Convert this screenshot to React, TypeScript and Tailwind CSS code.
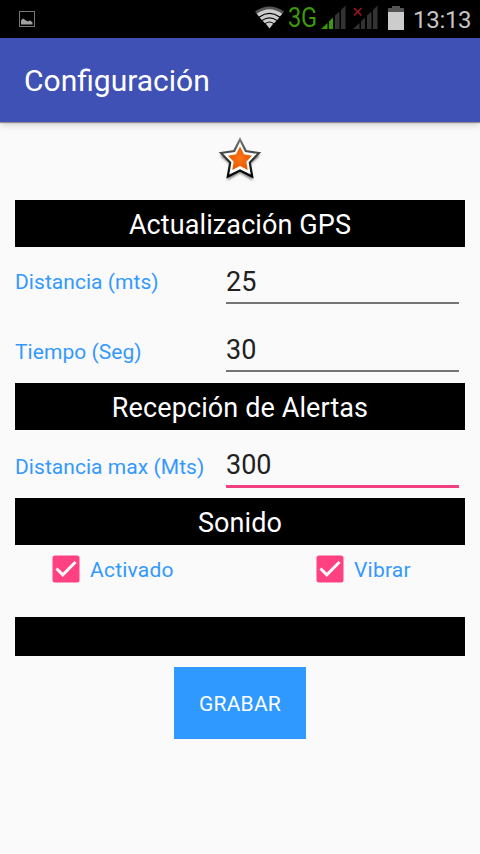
import React from 'react';

const StatusBar: React.FC = () => {
  return (
    <div className="h-[38px] bg-black flex items-start justify-between pl-[19px] pr-[9px]">
      <svg className="mt-[11px]" width="16" height="16" viewBox="0 0 16 16">
        <rect x="0.5" y="0.5" width="15" height="15" fill="none" stroke="#777777" />
        <path d="M2 13.500V9.500L4 7.500L5.500 8.500L7 9.500L9 10.500L10.500 9.500L12 10L13.500 11.500V13.500z" fill="#a0a0a0" />
      </svg>

      <div className="flex items-start">
        {/* Wifi */}
        <svg className="mt-[6px]" width="29" height="23" viewBox="0 0 29 23">
          <path d="M0 5.500Q14.500-4.500 29 5.500L26 9.500Q14.500 1.500 3 9.500z" fill="#555555" />
          <path d="M14.500 22.500L10.800 17.800Q14.500 15.200 18.200 17.800z" fill="#cccccc" />
          <path d="M1.800 7.700Q14.500-1.300 27.200 7.700L25 10.500Q14.500 3.200 4 10.500z" fill="#cccccc" />
          <path d="M4.700 11.400Q14.500 4.800 24.300 11.400L22.200 13.900Q14.500 8.800 6.800 13.900z" fill="#cccccc" />
          <path d="M7.500 14.700Q14.500 10.200 21.500 14.700L19 17.200Q14.500 14 10 17.200z" fill="#cccccc" />
        </svg>
        <span className="ml-[4px] mt-[3px] w-[29px] origin-left scale-x-[0.88] text-[27px] leading-[31px] tracking-[-0.4px] text-[#3c9a08]">3G</span>

        {/* Mobile signal, SIM 1 */}
        <svg className="ml-[4px] mt-[5px]" width="25" height="24" viewBox="0 0 25 24">
          <path d="M0 24L6.500 18V24z M8 16.500L12 12.500V24H8z" fill="#3c9a08" />
          <path d="M14 10.500L18.500 6.500V24H14z M20 5L24.500 0.500V24H20z" fill="#333333" />
        </svg>

        {/* Mobile signal, SIM 2 */}
        <svg className="ml-[7px] mt-[5px]" width="25" height="24" viewBox="0 0 25 24">
          <path d="M0 24L6.500 18V24z M8 16.500L12 12.500V24H8z M14 10.500L18.500 6.500V24H14z M20 5L24.500 0.500V24H20z" fill="#333333" />
          <path d="M1 3L8.500 10.500M8.500 3L1 10.500" stroke="#a31520" strokeWidth="1.500" />
        </svg>

        {/* Battery */}
        <svg className="ml-[10px] mt-[6px]" width="16" height="24" viewBox="0 0 16 24">
          <path d="M0 2H4V0H12V2H16V7H0z" fill="#555555" />
          <rect x="0" y="6" width="16" height="18" fill="#cccccc" />
        </svg>
        <span className="ml-[9px] mt-[6px] w-[58px] whitespace-nowrap text-[24px] leading-[29px] tracking-[-0.3px] text-[#c4c4c4]">13:13</span>
      </div>
    </div>
  );
};

const SectionTitle: React.FC<{ title: string }> = ({ title }) => {
  return (
    <h2 className="h-[47px] bg-black text-center text-[27px] leading-[51px] tracking-[0.1px] text-white">
      {title}
    </h2>
  );
};

interface FieldProps {
  label: string;
  value: string;
  focused?: boolean;
}

const Field: React.FC<FieldProps> = ({ label, value, focused }) => {
  return (
    <div className="flex items-start">
      <span className="w-[211px] pt-[8px] text-[21px] leading-[26px] tracking-[0.05px] whitespace-nowrap text-[#3399ff]">{label}</span>
      <div
        className={
          focused
            ? 'w-[233px] h-[42px] pt-[3px] border-b-[3px] border-[#f04080] text-[27px] leading-[32px] text-[#212121]'
            : 'w-[233px] h-[41px] pt-[3px] border-b-2 border-[#747474] text-[27px] leading-[32px] text-[#212121]'
        }
      >
        {value}
      </div>
    </div>
  );
};

const CheckItem: React.FC<{ label: string }> = ({ label }) => {
  return (
    <div className="flex items-center gap-[10px]">
      <svg width="28" height="28" viewBox="0 0 28 28">
        <rect x="0.500" y="0.500" width="27" height="27" rx="2.500" fill="#ff4081" />
        <path d="M4.500 13.500L10.800 19.800L23.500 7" fill="none" stroke="#fafafa" strokeWidth="3" />
      </svg>
      <span className="pt-[2px] text-[21px] leading-[26px] tracking-[0.22px] text-[#3399ff]">{label}</span>
    </div>
  );
};

const App: React.FC = () => {
  return (
    <div className="w-[480px] h-[854px] overflow-hidden bg-[#fafafa] font-[Roboto,sans-serif]">
      <StatusBar />

      <header className="h-[84px] bg-[#3f51b5] flex items-center pl-6 shadow-[0_1px_1px_rgba(0,0,0,0.35),0_2px_8px_rgba(0,0,0,0.2)]">
        <h1 className="pt-[2px] text-[30px] leading-[36px] text-white">Configuración</h1>
      </header>

      <main className="px-[15px]">
        <div className="h-[78px] flex justify-center pt-[14px]">
          <svg width="46" height="48" viewBox="0 0 46 48">
            <defs>
              <linearGradient id="edge" x1="0" y1="0" x2="0" y2="1">
                <stop offset="0" stopColor="#7a7a7a" />
                <stop offset="0.600" stopColor="#2a2a2a" />
                <stop offset="1" stopColor="#000000" />
              </linearGradient>
              <radialGradient id="core">
                <stop offset="0" stopColor="#fa741a" />
                <stop offset="1" stopColor="#e85a00" />
              </radialGradient>
              <filter id="soft" x="-20%" y="-20%" width="140%" height="140%">
                <feGaussianBlur stdDeviation="1" />
              </filter>
            </defs>
            <path d="M23 5L29 18L43 19.500L32.500 29L35.800 44.500L23 37L10.200 44.500L13.500 29L3 19.500L17 18z" fill="#000000" opacity="0.500" filter="url(#soft)" />
            <path d="M23 3.500L28.800 15L42 17L32.800 26.500L35.200 40.500L23 34.500L10.800 40.500L13.200 26.500L4 17L17.200 15z" fill="#ffffff" stroke="url(#edge)" strokeWidth="2.200" />
            <path d="M23 10.500L27 18.300L35 19.800L29.300 25.700L30.800 34L23 30L15.200 34L16.700 25.700L11 19.800L19 18.300z" fill="url(#core)" />
          </svg>
        </div>

        <SectionTitle title="Actualización GPS" />
        <div className="pt-4 pb-[11px] flex flex-col gap-[27px]">
          <div className="[&_span]:pt-[6px]">
            <Field label="Distancia (mts)" value="25" />
          </div>
          <Field label="Tiempo (Seg)" value="30" />
        </div>

        <SectionTitle title="Recepción de Alertas" />
        <div className="pt-4 pb-[10px]">
          <Field label="Distancia max (Mts)" value="300" focused />
        </div>

        <SectionTitle title="Sonido" />
        <div className="h-[72px] pt-[10px] pl-[37px] grid grid-cols-[264px_1fr] items-start">
          <CheckItem label="Activado" />
          <CheckItem label="Vibrar" />
        </div>

        <div className="h-[39px] bg-black" />
        <div className="pt-[11px] flex justify-center">
          <button className="w-[132px] h-[72px] pt-[3px] bg-[#3099ff] text-[21px] tracking-[0.2px] text-white">GRABAR</button>
        </div>
      </main>
    </div>
  );
};

export default App;
